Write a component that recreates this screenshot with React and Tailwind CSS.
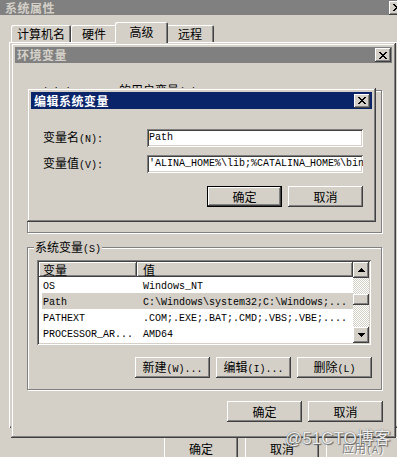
import React from 'react'

const raised = 'shadow-[inset_-1px_-1px_#404040,inset_1px_1px_#ffffff,inset_-2px_-2px_#808080,inset_2px_2px_#d4d0c8]'
const defRaised = 'shadow-[inset_-1px_-1px_#000000,inset_1px_1px_#000000,inset_-2px_-2px_#404040,inset_2px_2px_#ffffff,inset_-3px_-3px_#808080]'
const sunken = 'shadow-[inset_1px_1px_#808080,inset_-1px_-1px_#ffffff,inset_2px_2px_#404040,inset_-2px_-2px_#d4d0c8]'
const frame = 'shadow-[inset_-1px_-1px_#404040,inset_1px_1px_#d4d0c8,inset_-2px_-2px_#808080,inset_2px_2px_#ffffff]'

const Mono = ({ children, className = '' }) => (
  <span className={`font-['Liberation_Mono',monospace] text-[10px] ${className}`}>{children}</span>
)

const CloseBtn = () => (
  <div className={`w-[16px] h-[14px] bg-[#d4d0c8] ${raised} flex items-center justify-center`}>
    <svg width="8" height="7" viewBox="0 0 8 7" shapeRendering="crispEdges">
      <path
        fill="#000"
        d="M0 0h2v1H0zM6 0h2v1H6zM1 1h2v1H1zM5 1h2v1H5zM2 2h4v1H2zM3 3h2v1H3zM2 4h4v1H2zM1 5h2v1H1zM5 5h2v1H5zM0 6h2v1H0zM6 6h2v1H6z"
      />
    </svg>
  </div>
)

const Arrow = ({ down }) => (
  <svg width="7" height="4" viewBox="0 0 7 4" shapeRendering="crispEdges">
    <path
      fill="#000"
      d={down ? 'M0 0h7v1H0zM1 1h5v1H1zM2 2h3v1H2zM3 3h1v1H3z' : 'M3 0h1v1H3zM2 1h3v1H2zM1 2h5v1H1zM0 3h7v1H0z'}
    />
  </svg>
)

const Button = ({ children, def, w = 'w-[75px]', h = 'h-[21px]', disabled }) => (
  <div className={`${w} ${h} bg-[#d4d0c8] ${def ? defRaised : raised} flex items-center justify-center shrink-0`}>
    <span className={disabled ? 'text-[#808080] [text-shadow:1px_1px_0_#ffffff]' : ''}>{children}</span>
  </div>
)

const Group = ({ label, children, className = '' }) => (
  <div className={`relative border border-[#808080] shadow-[1px_1px_0_#ffffff,inset_1px_1px_0_#ffffff] ${className}`}>
    <span className="absolute left-[6px] top-[-8px] bg-[#d4d0c8] px-[1px] leading-[14px] whitespace-nowrap">{label}</span>
    {children}
  </div>
)

const rows = [
  ['OS', 'Windows_NT'],
  ['Path', 'C:\\Windows\\system32;C:\\Windows;...'],
  ['PATHEXT', '.COM;.EXE;.BAT;.CMD;.VBS;.VBE;....'],
  ['PROCESSOR_AR...', 'AMD64'],
]

const VarList = ({ items = [], selected = -1 }) => (
  <div className={`ml-[9px] mt-[12px] w-[334px] h-[85px] bg-white ${sunken} p-[2px] flex`}>
    <div className="flex-1 flex flex-col">
      <div className="flex h-[15px]">
        <div className={`w-[98px] ${raised} bg-[#d4d0c8] flex items-center pl-[4px]`}>变量</div>
        <div className={`flex-1 ${raised} bg-[#d4d0c8] flex items-center pl-[6px]`}>值</div>
      </div>
      {items.map(([k, v], i) => (
        <div key={k} className={`flex h-[16px] items-center ml-[3px] ${i === selected ? 'bg-[#d4d0c8]' : ''}`}>
          <div className="w-[95px] pl-[1px]">
            <Mono>{k}</Mono>
          </div>
          <div className="flex-1 pl-[6px] whitespace-nowrap">
            <Mono>{v}</Mono>
          </div>
        </div>
      ))}
    </div>
    <div className="w-[16px] flex flex-col">
      <div className={`h-[16px] bg-[#d4d0c8] ${raised} flex items-center justify-center`}>
        <Arrow />
      </div>
      <div className="flex-1 bg-[repeating-conic-gradient(#d4d0c8_0_25%,#ffffff_0_50%)] bg-[length:2px_2px]">
        <div className={`mt-[16px] h-[11px] bg-[#d4d0c8] ${raised}`} />
      </div>
      <div className={`h-[16px] bg-[#d4d0c8] ${raised} flex items-center justify-center`}>
        <Arrow down />
      </div>
    </div>
  </div>
)

const GroupButtons = () => (
  <div className="flex justify-end gap-[6px] pr-[9px] mt-[12px]">
    <Button>
      新建<Mono>(W)...</Mono>
    </Button>
    <Button>
      编辑<Mono>(I)...</Mono>
    </Button>
    <Button>
      删除<Mono>(L)</Mono>
    </Button>
  </div>
)

const SysWindow = () => (
  <div className={`absolute left-[-4px] top-[-4px] w-[414px] bg-[#d4d0c8] p-[4px] ${frame} flex flex-col`}>
    <div className="h-[15px] bg-[#808080] flex items-center justify-between pl-[5px] pr-[1px]">
      <span className="font-bold text-[#d4d0c8] tracking-[0.5px]">系统属性</span>
      <CloseBtn />
    </div>
    <div className="relative z-10 flex items-end h-[20px] mt-[7px] pl-[11px]">
      {['计算机名', '硬件', '高级', '远程'].map((t, i) =>
        i === 2 ? (
          <div
            key={t}
            className="w-[53px] h-[21px] -mx-[2px] -mb-px bg-[#d4d0c8] rounded-t-[2px] shadow-[inset_1px_1px_#ffffff,inset_-1px_0_#404040,inset_-2px_0_#808080] flex justify-center pt-[4px] z-10"
          >
            {t}
          </div>
        ) : (
          <div
            key={t}
            className={`${i === 0 ? 'w-[60px]' : i === 1 ? 'w-[46px]' : 'w-[48px]'} h-[17px] bg-[#d4d0c8] rounded-t-[2px] shadow-[inset_1px_1px_#ffffff,inset_-1px_0_#404040,inset_-2px_0_#808080] flex justify-center pt-[3px]`}
          >
            {t}
          </div>
        )
      )}
    </div>
    <div className="ml-[9px] w-[397px] h-[386px] shadow-[inset_1px_1px_#ffffff,inset_-1px_-1px_#404040,inset_-2px_-2px_#808080]" />
    <div className="flex justify-end gap-[7px] pr-[6px] mt-[9px] mb-[6px]">
      <Button w="w-[74px]" h="h-[23px]">确定</Button>
      <Button w="w-[74px]" h="h-[23px]">取消</Button>
      <Button w="w-[74px]" h="h-[23px]" disabled>
        应用<Mono>(A)</Mono>
      </Button>
    </div>
  </div>
)

const EnvWindow = () => (
  <div className={`absolute left-[11px] top-[43px] w-[385px] h-[395px] bg-[#d4d0c8] p-[4px] ${frame} flex flex-col`}>
    <div className="h-[16px] bg-[#808080] flex items-center justify-between pl-[2px] pr-[1px]">
      <span className="font-bold text-[#d4d0c8] tracking-[0.5px]">环境变量</span>
      <CloseBtn />
    </div>
    <div className="pl-[12px]">
      <Group
        label={
          <>
            <Mono>Administrator </Mono>的用户变量<Mono>(U)</Mono>
          </>
        }
        className="mt-[27px] w-[355px] h-[143px]"
      >
        <VarList />
        <GroupButtons />
      </Group>
      <Group
        label={
          <>
            系统变量<Mono>(S)</Mono>
          </>
        }
        className="mt-[14px] w-[355px] h-[143px]"
      >
        <VarList items={rows} selected={1} />
        <GroupButtons />
      </Group>
    </div>
    <div className="flex justify-end gap-[6px] pr-[9px] mt-[11px]">
      <Button>确定</Button>
      <Button>取消</Button>
    </div>
  </div>
)

const Field = ({ label, value, caret }) => (
  <div className="flex items-center">
    <div className="w-[104px] whitespace-nowrap">{label}</div>
    <div className={`w-[216px] h-[18px] bg-white ${sunken} flex items-center pl-[2px] overflow-hidden whitespace-nowrap`}>
      <Mono className="text-[9.7px]">{value}</Mono>
      {caret && (
        <>
          <span className="inline-block w-px h-[13px] bg-black -mr-px" />
          <Mono className="text-[9.7px]">{caret}</Mono>
        </>
      )}
    </div>
  </div>
)

const EditWindow = () => (
  <div className={`absolute left-[27px] top-[88px] w-[349px] h-[134px] bg-[#d4d0c8] p-[4px] ${frame} flex flex-col`}>
    <div className="h-[17px] bg-[#0a246a] flex items-center justify-between pl-[3px] pr-[2px]">
      <span className="font-bold text-white tracking-[0.5px]">编辑系统变量</span>
      <CloseBtn />
    </div>
    <div className="pl-[12px] pr-[9px] flex flex-col">
      <div className="mt-[20px]">
        <Field
          label={
            <>
              变量名<Mono>(N):</Mono>
            </>
          }
          value="Path"
        />
      </div>
      <div className="mt-[8px]">
        <Field
          label={
            <>
              变量值<Mono>(V):</Mono>
            </>
          }
          value="'ALINA_HOME%\lib;%CATALINA_"
          caret="HOME%\bin"
        />
      </div>
      <div className="flex justify-end gap-[6px] mt-[13px]">
        <Button def>确定</Button>
        <Button>取消</Button>
      </div>
    </div>
  </div>
)

export default function App() {
  return (
    <div className="relative w-[397px] h-[457px] overflow-hidden bg-[#d4d0c8] font-['Noto_Sans_CJK_SC',sans-serif] text-[12px] leading-none text-black">
      <SysWindow />
      <EnvWindow />
      <EditWindow />
      <div className="absolute left-[285px] top-[430px] text-[17px] leading-none text-white/90 font-['Liberation_Sans','Noto_Sans_CJK_SC',sans-serif] [text-shadow:0_0_1px_#444444,1px_1px_1px_#666666] whitespace-nowrap">
        @51CTO博客
      </div>
    </div>
  )
}
